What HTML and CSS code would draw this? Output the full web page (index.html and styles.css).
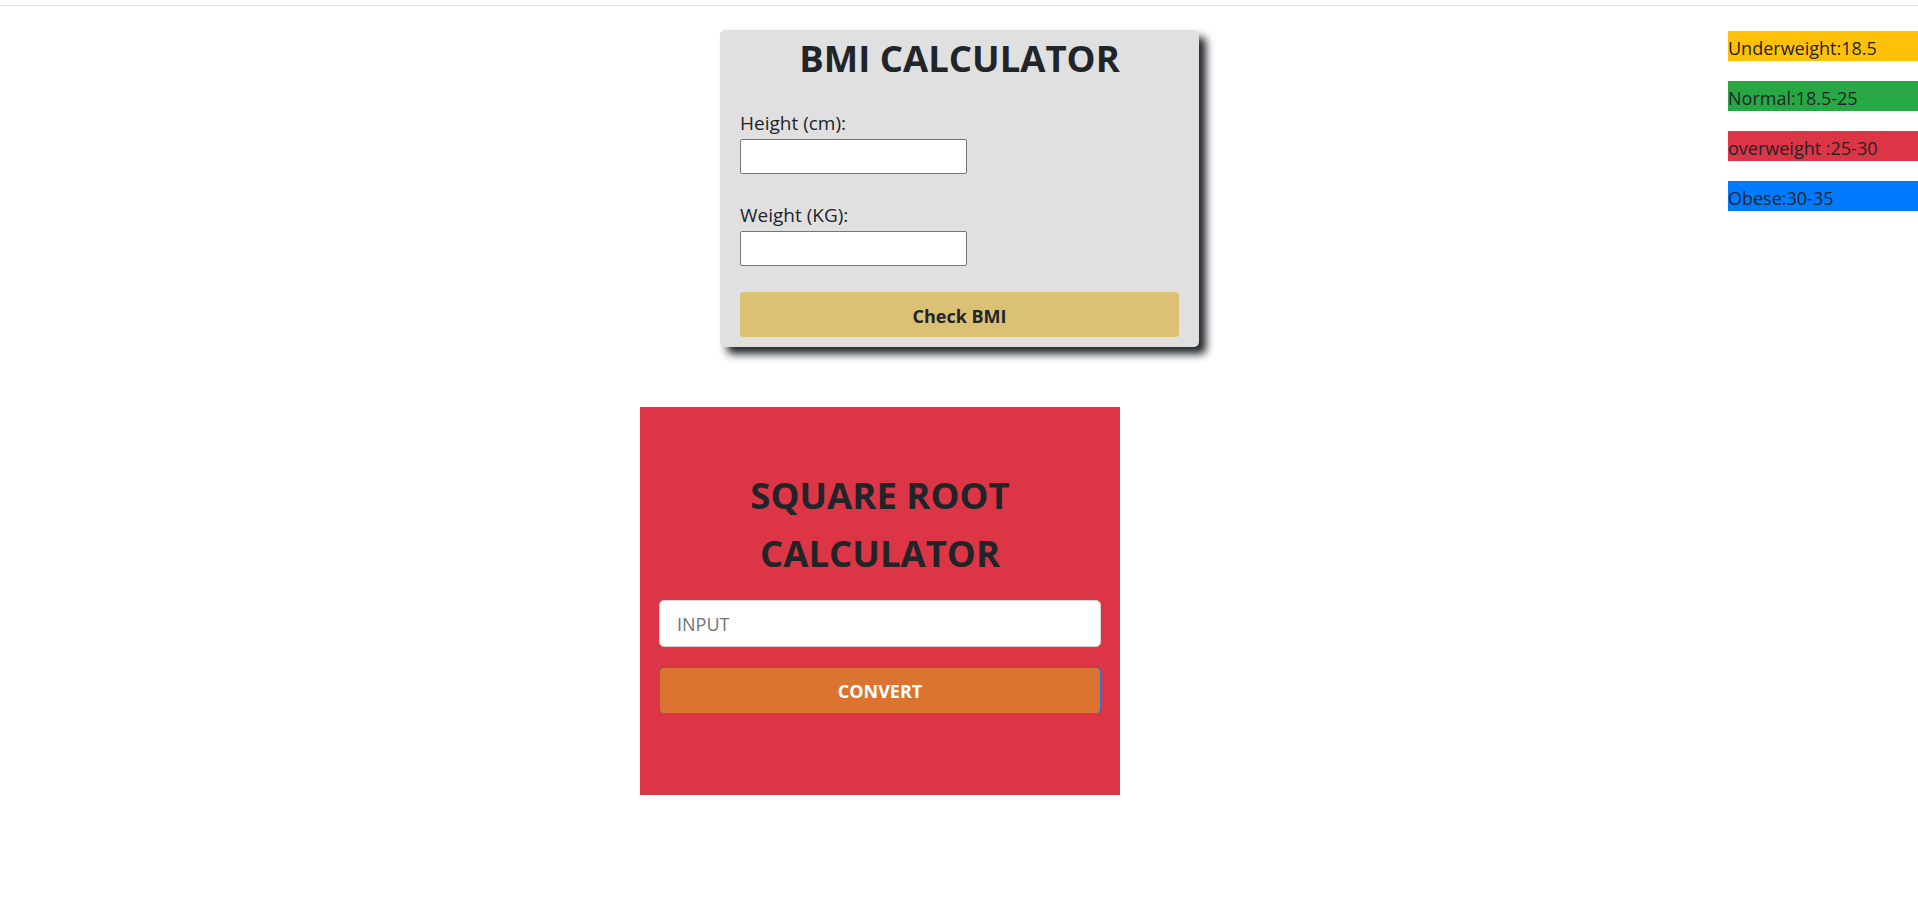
FILE: index.html
```html
<!DOCTYPE html>
<html>
<head>
<meta charset="utf-8">
<link rel="stylesheet" href="styles.css">
</head>
<body>
<div class="topbar"></div>
<div class="top-row">
  <div class="spacer"></div>
  <div class="bmi-card">
    <h1 class="bmi-title">BMI CALCULATOR</h1>
    <label class="field-label">Height (cm):</label>
    <input class="field-input" type="text">
    <label class="field-label second">Weight (KG):</label>
    <input class="field-input" type="text">
    <button class="bmi-btn">Check BMI</button>
  </div>
  <div class="legend">
    <div class="legend-item yellow">Underweight:18.5</div>
    <div class="legend-item green">Normal:18.5-25</div>
    <div class="legend-item red">overweight :25-30</div>
    <div class="legend-item blue">Obese:30-35</div>
  </div>
</div>
<div class="sqrt-card">
  <h2 class="sqrt-title">SQUARE ROOT<br>CALCULATOR</h2>
  <input class="sqrt-input" type="text" placeholder="INPUT">
  <button class="sqrt-btn">CONVERT</button>
</div>
</body>
</html>
```
FILE: styles.css
```css
* { box-sizing: border-box; }
body {
  margin: 0;
  font-family: "Open Sans", "Noto Sans", sans-serif;
  color: #212529;
  background: #fff;
}
.topbar {
  height: 6px;
  border-bottom: 1px solid #dedede;
}
.top-row {
  display: grid;
  grid-template-columns: 1fr 480px 1fr;
  align-items: start;
  padding-top: 24px;
}
.bmi-card {
  margin-left: 1px;
  background: #e0e0e0;
  border-radius: 5px;
  box-shadow: 7px 7px 8px #212529;
  padding: 4px 20px 10px 20px;
  display: flex;
  flex-direction: column;
  align-items: flex-start;
}
.bmi-title {
  align-self: stretch;
  text-align: center;
  margin: 0;
  font-size: 36.5px;
  line-height: 49px;
  font-weight: 700;
  color: #212529;
}
.field-label {
  font-size: 19px;
  line-height: 26px;
  margin-top: 27px;
  color: #212529;
}
.field-label.second { margin-top: 28px; }
.field-input {
  margin-top: 3px;
  width: 227px;
  height: 35px;
  border: 1px solid #767676;
  border-radius: 2px;
  background: #fff;
}
.bmi-btn {
  margin-top: 26px;
  align-self: stretch;
  height: 45px;
  border: none;
  border-radius: 4px;
  background: #dcc074;
  font-family: "Open Sans", "Noto Sans", sans-serif;
  font-weight: 700;
  font-size: 18px;
  padding-top: 3px;
  color: #212529;
}
.legend {
  justify-self: end;
  width: 190px;
  display: flex;
  flex-direction: column;
  gap: 20px;
  padding-top: 1px;
}
.legend-item {
  height: 30px;
  padding-top: 2px;
  line-height: 30px;
  font-size: 18px;
  color: #212529;
  white-space: nowrap;
  overflow: visible;
}
.yellow { background: #ffc107; }
.green { background: #28a745; }
.red { background: #dc3545; }
.blue { background: #007bff; }
.sqrt-card {
  margin-top: 60px;
  margin-left: 640px;
  width: 480px;
  height: 388px;
  background: #dc3545;
  padding: 59px 19px 0 19px;
  display: flex;
  flex-direction: column;
}
.sqrt-title {
  margin: 0;
  text-align: center;
  font-size: 36.5px;
  line-height: 58px;
  font-weight: 700;
  color: #212529;
}
.sqrt-input {
  margin-top: 18px;
  height: 47px;
  border: 1px solid #ced4da;
  border-radius: 5px;
  padding: 0 17px;
  font-family: "Open Sans", "Noto Sans", sans-serif;
  font-size: 18px;
  color: #495057;
  background: #fff;
}
.sqrt-input::placeholder { color: #6c757d; }
.sqrt-btn {
  margin-top: 20px;
  height: 47px;
  border: 1px solid #2f6fd6;
  border-radius: 5px;
  background: #da7430;
  font-family: "Open Sans", "Noto Sans", sans-serif;
  font-weight: 700;
  font-size: 18px;
  color: #fff;
}
```
